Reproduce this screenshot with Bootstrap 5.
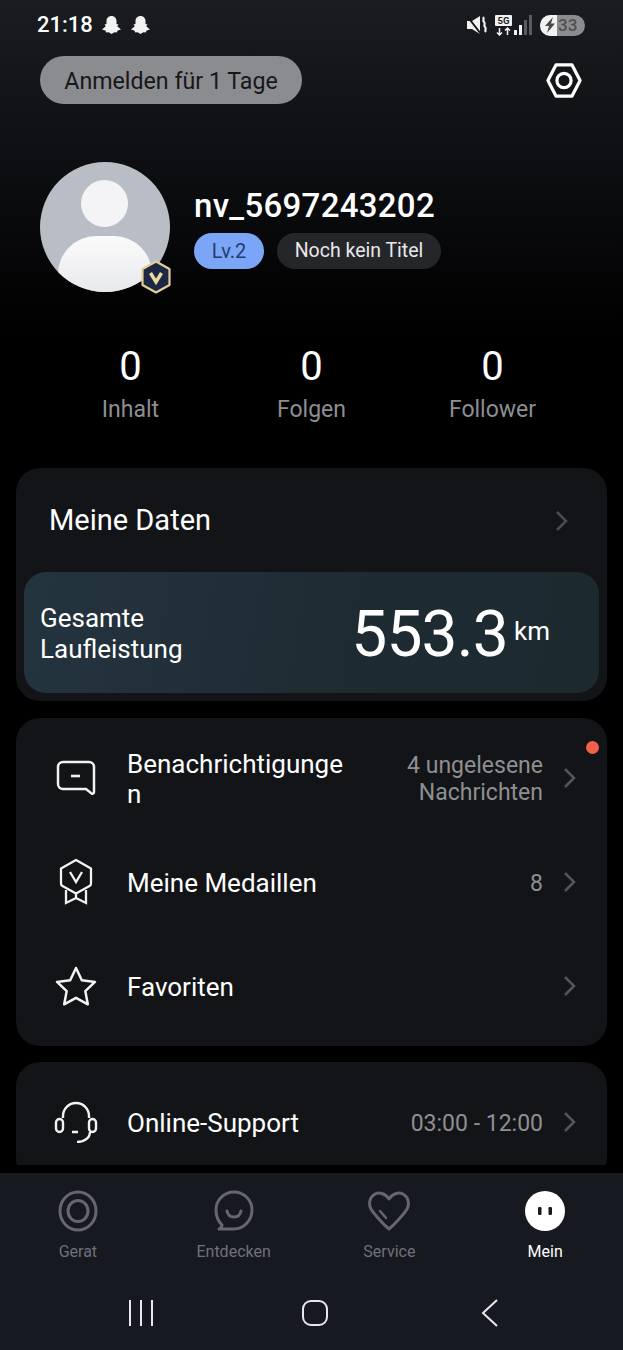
<!DOCTYPE html>
<html lang="de">
<head>
<meta charset="UTF-8">
<meta name="viewport" content="width=device-width, initial-scale=1.0">
<title>Mein</title>
<link href="https://cdn.jsdelivr.net/npm/bootstrap@5.3.0/dist/css/bootstrap.min.css" rel="stylesheet">
<style>
html, body { height: 100%; }
body { background: #000; font-family: Roboto, "Liberation Sans", sans-serif; color: #fff; }
.phone { width: 623px; height: 1350px; overflow: hidden; }

/* top area */
.content-area { height: 1165px; overflow: hidden; flex: none; background: linear-gradient(#1a1c21 0, #0d0e11 170px, #000 330px); }
.status-row { height: 48px; padding: 2px 38px 0 37px; }
.clock { font-size: 22px; font-weight: 500; line-height: 1; }
.batt { width: 45px; height: 21px; border-radius: 11px; background: #8c8c8e; overflow: hidden; }
.batt-left { width: 17px; background: #f2f2f2; }
.batt-num { font-size: 17px; font-weight: 500; color: #4f4f52; line-height: 21px; padding-left: 1px; }
.head-row { padding: 8px 41px 0 40px; height: 48px; margin-bottom: 58px; box-sizing: content-box; }
.checkin { height: 48px; width: 262px; border-radius: 24px; background: #8b8c8f; color: #16171a; font-size: 23.2px; padding-top: 3px; }

/* profile */
.profile-row { padding-left: 40px; height: 130px; }
.avatar-wrap { width: 130px; height: 130px; margin-right: 24px; }
.avatar-disc { width: 130px; height: 130px; border-radius: 50%; background: #b9bdc5; overflow: hidden; }
.avatar-head { width: 47px; height: 47px; left: 41px; top: 18px; border-radius: 50%; background: #f4f4f6; }
.avatar-body { width: 94px; height: 70px; left: 18px; top: 74px; border-radius: 38px 38px 0 0; background: linear-gradient(#fbfbfc, #e4e5e8); }
.avatar-badge { width: 32px; height: 34px; right: -2px; bottom: -2px; }
.user-name { font-size: 33px; font-weight: 500; line-height: 38px; margin-top: 1px; margin-bottom: 8px; letter-spacing: .3px; }
.lv-pill { height: 36px; width: 70px; border-radius: 18px; background: #7ba6f8; color: #1f3d73; font-size: 20px; }
.title-pill { height: 36px; width: 164px; border-radius: 18px; background: #25262a; color: #e9e9ea; font-size: 19.5px; margin-left: 13px; }

/* stats */
.stats-row { padding: 0 40px; margin-top: 50px; height: 126px; }
.stat-num { font-size: 40px; line-height: 50px; }
.stat-label { font-size: 23px; color: #8d8e91; line-height: 34px; margin-top: 1px; }

/* cards */
.panel { margin: 0 16px 16px; background: #131417; border-radius: 24px; }
.data-panel { height: 233px; padding: 8px; margin-bottom: 17px; }
.data-head { height: 96px; padding: 0 30px 6px 25px; font-size: 29px; }
.mileage { height: 121px; border-radius: 22px; background: linear-gradient(100deg, #24343f, #1e2b33 55%, #1c2a30); padding: 0 49px 0 17px; }
.mileage-label { font-size: 26px; line-height: 31px; padding-top: 2px; margin-left: -1px; }
.mileage-num { font-size: 64px; line-height: 1; letter-spacing: -.8px; margin-top: 5px; }
.mileage-unit { font-size: 26px; margin-left: 6px; margin-top: -2px; }
.list-panel { padding: 8px 0; }
.menu-row { height: 104px; padding: 0 30px 0 35px; }
.menu-icon { width: 50px; margin-right: 26px; flex: none; }
.menu-text { font-size: 26px; line-height: 30px; padding-top: 2px; }
.menu-value { font-size: 23px; line-height: 27px; color: #8e8f93; text-align: right; margin-right: 20px; padding-top: 2px; }
.menu-chev { flex: none; }
.red-dot { width: 13px; height: 13px; border-radius: 50%; background: #f2604c; right: 8px; top: 23px; }

/* tabs */
.tab-bar { margin-top: 8px; flex: 1; background: #171921; }
.tab-item { padding-top: 17px; height: 112px; font-size: 16px; color: #6f7177; }
.tab-item.is-on { color: #fff; }
.tab-text { line-height: 20px; margin-top: 10px; }
.sys-nav { height: 65px; padding: 0 0 10px 7px; }
.sys-cell { width: 174.5px; }
</style>
</head>
<body>
<div class="phone d-flex flex-column">
  <div class="content-area">
    <!-- status bar -->
    <div class="status-row d-flex align-items-center justify-content-between">
      <div class="d-flex align-items-center gap-2">
        <span class="clock">21:18</span>
        <svg width="21" height="20" viewBox="0 0 21 20"><path fill="#f2f2f2" d="M10.500 1c3 0 5 2.200 5 5v3l2 .6-1.300 1.600 3.800 3.300-3.300 1-1 2-2.400-.2-2.800 1.700-2.800-1.700-2.400.2-1-2-3.300-1 3.800-3.300L3.500 9.600l2-.6V6c0-2.800 2-5 5-5z"/></svg>
        <svg width="21" height="20" viewBox="0 0 21 20"><path fill="#f2f2f2" d="M10.500 1c3 0 5 2.200 5 5v3l2 .6-1.300 1.600 3.800 3.300-3.300 1-1 2-2.400-.2-2.800 1.700-2.800-1.700-2.400.2-1-2-3.300-1 3.800-3.300L3.500 9.600l2-.6V6c0-2.800 2-5 5-5z"/></svg>
      </div>
      <div class="d-flex align-items-center">
        <svg width="24" height="22" viewBox="0 0 24 22" class="me-1"><path fill="#f2f2f2" d="M1 7h5l8-5v18l-8-5H1z"/><path d="M1 2l14 18" stroke="#15161a" stroke-width="2"/><path d="M17 3c2 2-1 3 1 5s-1 3 1 5-1 3 1 5" fill="none" stroke="#f2f2f2" stroke-width="2.200"/></svg>
        <svg width="19" height="22" viewBox="0 0 19 22"><rect x="1" y="1" width="17" height="11" rx="1" fill="#f2f2f2"/><text x="9.500" y="10" font-size="9.500" font-weight="700" text-anchor="middle" fill="#1a1c21" font-family="Roboto, sans-serif">5G</text><path d="M5.500 14v7M3 18.500l2.500 2.500 2.500-2.500M13.500 21v-7M11 16.500l2.500-2.500 2.500 2.500" fill="none" stroke="#f2f2f2" stroke-width="1.500"/></svg>
        <svg width="19" height="22" viewBox="0 0 19 22" class="me-2"><rect x="1" y="16" width="3" height="5" fill="#f2f2f2"/><rect x="6" y="11" width="3" height="10" fill="#f2f2f2"/><rect x="11" y="6" width="3" height="15" fill="#5a5b5e"/><rect x="16" y="1" width="3" height="20" fill="#5a5b5e"/></svg>
        <div class="batt d-flex">
          <div class="batt-left d-flex align-items-center justify-content-end">
            <svg width="13" height="16" viewBox="0 0 13 16"><path fill="#4a4a4d" d="M9 0L1 9h4l-2 7 8-9.500H7z"/></svg>
          </div>
          <span class="batt-num">33</span>
        </div>
      </div>
    </div>

    <!-- check in + settings -->
    <div class="head-row d-flex align-items-center justify-content-between">
      <div class="checkin d-flex align-items-center justify-content-center">Anmelden für 1 Tage</div>
      <svg width="36" height="35" viewBox="0 0 38 37"><path d="M10.500 2h17L36 18.500 27.500 35h-17L2 18.500z" fill="none" stroke="#fff" stroke-width="3.400" stroke-linejoin="round"/><circle cx="19" cy="18.500" r="7.500" fill="none" stroke="#fff" stroke-width="3.400"/></svg>
    </div>

    <!-- profile -->
    <div class="profile-row d-flex align-items-center">
      <div class="avatar-wrap position-relative flex-shrink-0">
        <div class="avatar-disc position-relative">
          <div class="avatar-head position-absolute"></div>
          <div class="avatar-body position-absolute"></div>
        </div>
        <svg class="avatar-badge position-absolute" viewBox="0 0 32 34"><path d="M16 1.500l13.500 7.500v16L16 32.500 2.500 25V9z" fill="#1e2744" stroke="#e3cf9a" stroke-width="2.200" stroke-linejoin="round"/><path d="M10.500 13l5.500 9 5.500-9" fill="none" stroke="#ecd9a2" stroke-width="3.400"/></svg>
      </div>
      <div>
        <div class="user-name">nv_5697243202</div>
        <div class="d-flex">
          <div class="lv-pill d-flex align-items-center justify-content-center">Lv.2</div>
          <div class="title-pill d-flex align-items-center justify-content-center">Noch kein Titel</div>
        </div>
      </div>
    </div>

    <!-- stats -->
    <div class="stats-row row g-0 text-center">
      <div class="col-4"><div class="stat-num">0</div><div class="stat-label">Inhalt</div></div>
      <div class="col-4"><div class="stat-num">0</div><div class="stat-label">Folgen</div></div>
      <div class="col-4"><div class="stat-num">0</div><div class="stat-label">Follower</div></div>
    </div>

    <!-- data -->
    <div class="panel data-panel">
      <div class="data-head d-flex align-items-center justify-content-between">
        <span>Meine Daten</span>
        <svg width="14" height="22" viewBox="0 0 14 22"><path d="M2 2l9 9-9 9" fill="none" stroke="#4b4c50" stroke-width="2.500"/></svg>
      </div>
      <div class="mileage d-flex align-items-center justify-content-between">
        <div class="mileage-label">Gesamte<br>Laufleistung</div>
        <div class="d-flex align-items-center">
          <span class="mileage-num">553.3</span>
          <span class="mileage-unit">km</span>
        </div>
      </div>
    </div>

    <!-- menu -->
    <div class="panel list-panel position-relative">
      <span class="red-dot position-absolute"></span>
      <div class="menu-row d-flex align-items-center">
        <div class="menu-icon text-center">
          <svg width="42" height="38" viewBox="0 0 42 38"><path d="M8 3h26a5 5 0 0 1 5 5v25c0 1.500-1 2-2.500 1.500L31 30H8a5 5 0 0 1-5-5V8a5 5 0 0 1 5-5z" fill="none" stroke="#f2f2f2" stroke-width="2.500"/><path d="M16 17h9" stroke="#f2f2f2" stroke-width="2.600"/></svg>
        </div>
        <div class="menu-text flex-grow-1">Benachrichtigunge<br>n</div>
        <div class="menu-value">4 ungelesene<br>Nachrichten</div>
        <svg class="menu-chev" width="14" height="22" viewBox="0 0 14 22"><path d="M2 2l9 9-9 9" fill="none" stroke="#55565a" stroke-width="2.500"/></svg>
      </div>
      <div class="menu-row d-flex align-items-center">
        <div class="menu-icon text-center">
          <svg width="38" height="48" viewBox="0 0 38 48"><path d="M19 2l15 8.500v15c0 1-.5 2-1.500 2.500L19 35.500 5.500 28C4.500 27.500 4 26.500 4 25.500v-15z" fill="none" stroke="#f2f2f2" stroke-width="2.300" stroke-linejoin="round"/><path d="M13 14l6 10 6-10" fill="none" stroke="#f2f2f2" stroke-width="2.300"/><path d="M9 32v13l10-5 10 5V32M19 36v4" fill="none" stroke="#f2f2f2" stroke-width="2.300"/></svg>
        </div>
        <div class="menu-text flex-grow-1">Meine Medaillen</div>
        <div class="menu-value">8</div>
        <svg class="menu-chev" width="14" height="22" viewBox="0 0 14 22"><path d="M2 2l9 9-9 9" fill="none" stroke="#55565a" stroke-width="2.500"/></svg>
      </div>
      <div class="menu-row d-flex align-items-center">
        <div class="menu-icon text-center">
          <svg width="44" height="42" viewBox="0 0 44 42"><path d="M22 3l5.800 12.200 13.200 1.700-9.700 9.200 2.500 13.200L22 32.800 10.200 39.300l2.500-13.200L3 16.900l13.200-1.700z" fill="none" stroke="#f2f2f2" stroke-width="2.500" stroke-linejoin="round"/></svg>
        </div>
        <div class="menu-text flex-grow-1">Favoriten</div>
        <svg class="menu-chev" width="14" height="22" viewBox="0 0 14 22"><path d="M2 2l9 9-9 9" fill="none" stroke="#55565a" stroke-width="2.500"/></svg>
      </div>
    </div>

    <div class="panel list-panel">
      <div class="menu-row d-flex align-items-center">
        <div class="menu-icon text-center">
          <svg width="44" height="42" viewBox="0 0 44 42"><path d="M9 17v-2a13 13 0 0 1 26 0v2" fill="none" stroke="#f2f2f2" stroke-width="2.400"/><rect x="2" y="18" width="7" height="13" rx="3.500" fill="none" stroke="#f2f2f2" stroke-width="2.400"/><rect x="35" y="18" width="7" height="13" rx="3.500" fill="none" stroke="#f2f2f2" stroke-width="2.400"/><path d="M36 31c0 6-6 10-13 10M18 31h6" fill="none" stroke="#f2f2f2" stroke-width="2.400"/></svg>
        </div>
        <div class="menu-text flex-grow-1">Online-Support</div>
        <div class="menu-value">03:00 - 12:00</div>
        <svg class="menu-chev" width="14" height="22" viewBox="0 0 14 22"><path d="M2 2l9 9-9 9" fill="none" stroke="#55565a" stroke-width="2.500"/></svg>
      </div>
    </div>
  </div>

  <!-- bottom tabs -->
  <div class="tab-bar">
    <div class="row g-0 text-center">
      <div class="col-3 tab-item">
        <svg width="40" height="42" viewBox="0 0 40 42"><ellipse cx="20" cy="21" rx="18" ry="19" fill="none" stroke="#65676d" stroke-width="3"/><ellipse cx="20" cy="21" rx="10" ry="10.500" fill="none" stroke="#65676d" stroke-width="3"/></svg>
        <div class="tab-text">Gerat</div>
      </div>
      <div class="col-3 tab-item">
        <svg width="40" height="42" viewBox="0 0 40 42"><path d="M20 2c10 0 18 8 18 18s-8 19-18 19H5c2-1 3-2 3-4C4 31 2 26 2 20 2 10 10 2 20 2z" fill="none" stroke="#65676d" stroke-width="3" stroke-linejoin="round"/><path d="M13 21c1 5 4 6 7 6s6-1 7-6" fill="none" stroke="#65676d" stroke-width="3" stroke-linecap="round"/></svg>
        <div class="tab-text">Entdecken</div>
      </div>
      <div class="col-3 tab-item">
        <svg width="42" height="42" viewBox="0 0 42 42"><path d="M21 9C17 3 11 2 7 4 2 7 0 13 3 19c3 5 12 15 18 20 6-5 15-15 18-20 3-6 1-12-4-15-4-2-10-1-14 5z" fill="none" stroke="#65676d" stroke-width="3" stroke-linejoin="round"/><path d="M12 21l6 7" stroke="#65676d" stroke-width="2.500" stroke-linecap="round"/></svg>
        <div class="tab-text">Service</div>
      </div>
      <div class="col-3 tab-item is-on">
        <svg width="40" height="42" viewBox="0 0 40 42"><ellipse cx="20" cy="21" rx="20" ry="20" fill="#fff"/><rect x="13" y="17" width="3.500" height="8" rx="1.200" fill="#171921"/><rect x="23.500" y="17" width="3.500" height="8" rx="1.200" fill="#171921"/></svg>
        <div class="tab-text">Mein</div>
      </div>
    </div>
    <!-- android nav -->
    <div class="sys-nav d-flex align-items-center justify-content-center">
      <div class="sys-cell text-center"><svg width="28" height="28" viewBox="0 0 28 28"><path d="M3 1v26M14 1v26M25 1v26" stroke="#e8e8ea" stroke-width="2"/></svg></div>
      <div class="sys-cell text-center"><svg width="28" height="28" viewBox="0 0 28 28"><rect x="2" y="2" width="24" height="24" rx="8" fill="none" stroke="#e8e8ea" stroke-width="2"/></svg></div>
      <div class="sys-cell text-center"><svg width="20" height="28" viewBox="0 0 20 28"><path d="M17 1L3 14l14 13" fill="none" stroke="#e8e8ea" stroke-width="2"/></svg></div>
    </div>
  </div>
</div>
<script src="https://cdn.jsdelivr.net/npm/bootstrap@5.3.0/dist/js/bootstrap.bundle.min.js"></script>
</body>
</html>
